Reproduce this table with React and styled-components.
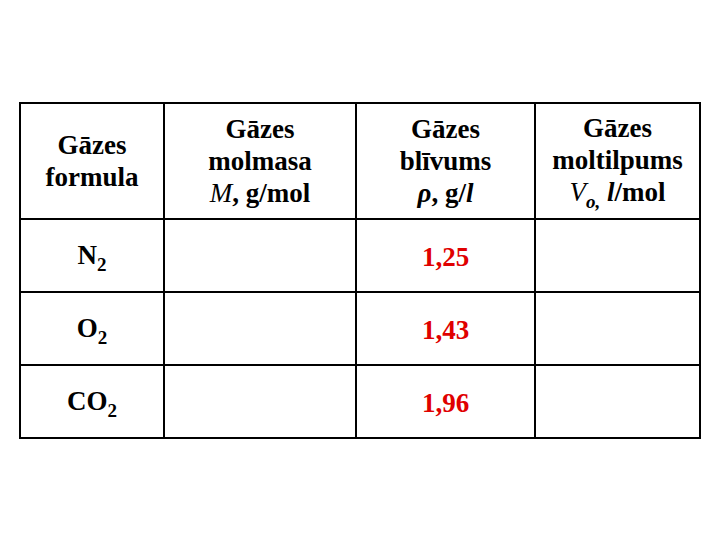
import * as React from 'react';
import styled, { createGlobalStyle } from 'styled-components';

const GlobalStyle = createGlobalStyle`
    html, body {
        margin: 0;
        padding: 0;
        background: #ffffff;
    }
`;

const Page = styled.div`
    width: 720px;
    height: 540px;
    padding: 102px 0 0 19px;
    box-sizing: border-box;
    font-family: 'Liberation Serif', 'Times New Roman', serif;
    font-weight: bold;
    color: #000000;
`;

const Grid = styled.div`
    display: grid;
    grid-template-columns: 144px 192px 179px 165px;
    grid-template-rows: 116px 73px 73px 73px;
    width: 682px;
    box-sizing: border-box;
    border-left: 2px solid #000;
    border-top: 2px solid #000;
`;

const Cell = styled.div`
    display: flex;
    align-items: center;
    justify-content: center;
    border-right: 2px solid #000;
    border-bottom: 2px solid #000;
    color: ${(p) => (p.$red ? '#e00000' : '#000000')};
    padding-top: ${(p) => (p.$head ? '0' : '2px')};
    box-sizing: border-box;
`;

const Text = styled.div`
    text-align: center;
    font-size: 27px;
    line-height: 32px;
    white-space: nowrap;
`;

const Sub = styled.span`
    font-size: 19px;
    position: relative;
    top: 7px;
`;

const Ital = styled.i`
    font-style: italic;
    font-weight: ${(p) => (p.$thin ? 'normal' : 'bold')};
`;

const rows = [
    { gas: 'N', sub: '2', density: '1,25' },
    { gas: 'O', sub: '2', density: '1,43' },
    { gas: 'CO', sub: '2', density: '1,96' },
];

export default function App() {
    return (
        <>
            <GlobalStyle />
            <Page>
                <Grid>
                    <Cell $head>
                        <Text>
                            Gāzes
                            <br />
                            formula
                        </Text>
                    </Cell>
                    <Cell $head>
                        <Text>
                            Gāzes
                            <br />
                            molmasa
                            <br />
                            <Ital $thin>M</Ital>, g/mol
                        </Text>
                    </Cell>
                    <Cell $head>
                        <Text>
                            Gāzes
                            <br />
                            blīvums
                            <br />
                            <Ital>ρ</Ital>, g/<Ital>l</Ital>
                        </Text>
                    </Cell>
                    <Cell $head>
                        <Text>
                            Gāzes
                            <br />
                            moltilpums
                            <br />
                            <Ital $thin>V</Ital>
                            <Sub>
                                <Ital>o,</Ital>
                            </Sub>{' '}
                            <Ital>l</Ital>/mol
                        </Text>
                    </Cell>
                    {rows.map((r) => (
                        <React.Fragment key={r.gas}>
                            <Cell>
                                <Text>
                                    {r.gas}
                                    <Sub>{r.sub}</Sub>
                                </Text>
                            </Cell>
                            <Cell />
                            <Cell $red>
                                <Text>{r.density}</Text>
                            </Cell>
                            <Cell />
                        </React.Fragment>
                    ))}
                </Grid>
            </Page>
        </>
    );
}
